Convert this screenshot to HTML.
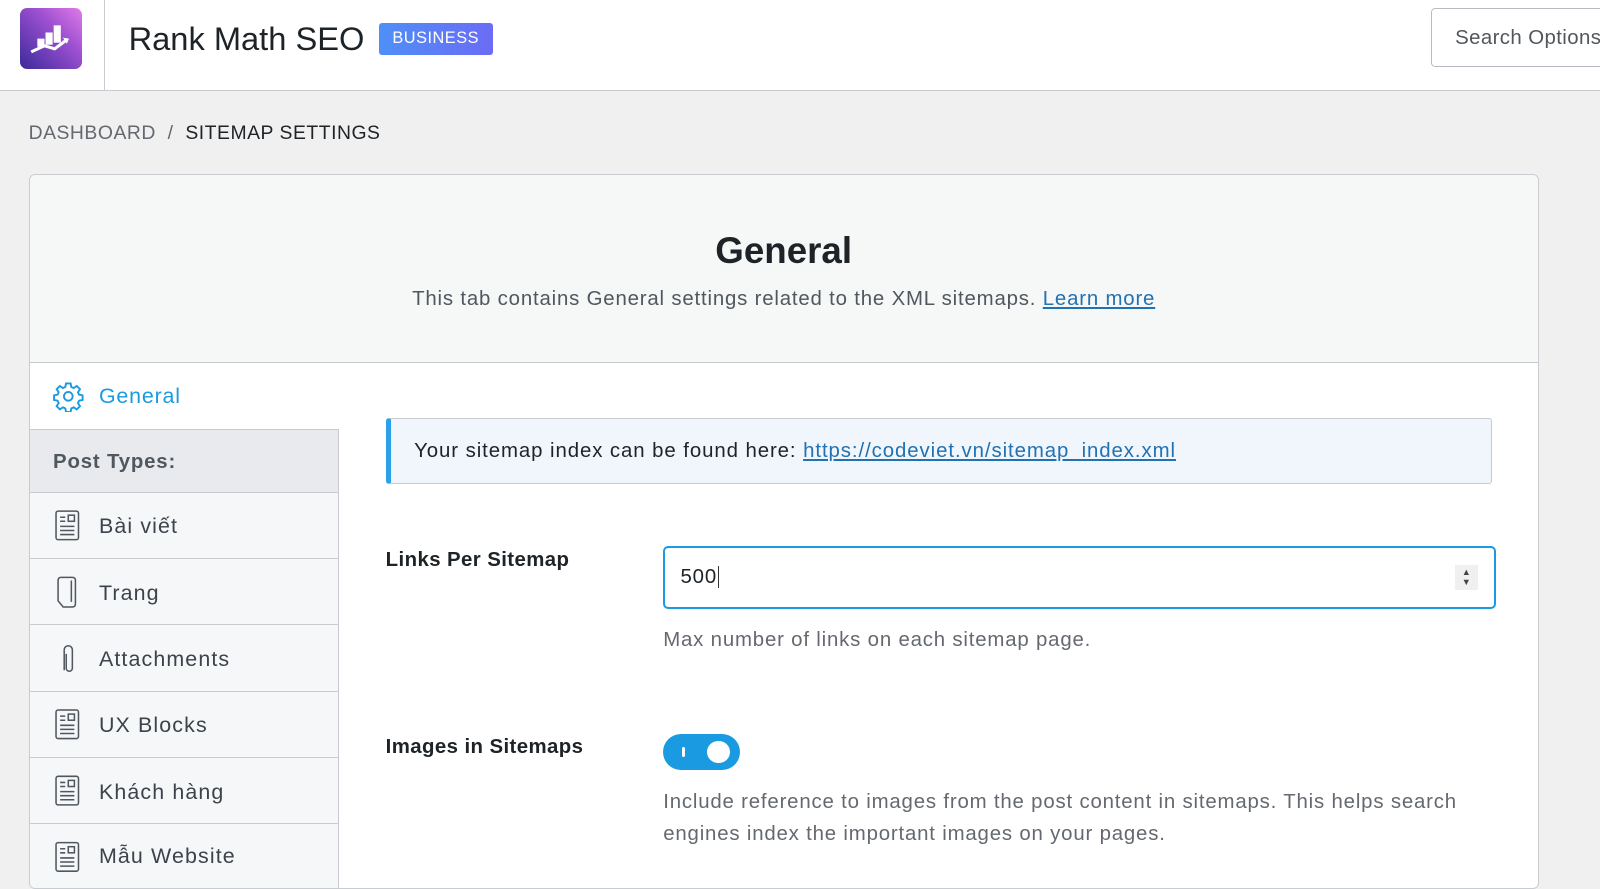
<!DOCTYPE html>
<html><head><meta charset="utf-8"><style>
html{zoom:1.0204}
body{margin:0;width:1568px;height:849px;overflow:hidden;background:#f0f0f1;font-family:"Liberation Sans",sans-serif;color:#242628;position:relative}
.a{position:absolute}
.hdr{left:0;top:0;width:1568px;height:88px;background:#fff;border-bottom:1px solid #c8ccd0}
.logo{left:20px;top:8px;width:60px;height:60px;border-radius:7px;background:linear-gradient(45deg,#3a2a9a,#9a4fd0 60%,#e07be8)}
.div{left:102px;top:0;width:1px;height:88px;background:#c8ccd0}
.title{left:126px;top:20px;font-size:32px;color:#1d2327}
.badge{left:371px;top:23px;width:112px;height:31px;border-radius:3px;background:linear-gradient(90deg,#4f8ff7,#6b6cf5);color:#fff;font-size:16px;line-height:31px;text-align:center;letter-spacing:.5px}
.search{left:1402px;top:8px;width:200px;height:58px;border:1px solid #b8bcc2;border-radius:4px;font-size:20px;color:#50575e;line-height:58px;padding-left:23px;box-sizing:border-box;letter-spacing:.4px}
.bc{left:28px;top:120px;font-size:19px;color:#646970;letter-spacing:.5px}
.card{left:28px;top:171px;width:1480px;height:700px;background:#fff;border:1px solid #c8ccd0;border-radius:6px;overflow:hidden;box-sizing:border-box;letter-spacing:.8px}
.chead{left:0;top:0;width:100%;height:183px;background:#f6f7f7;border-bottom:1px solid #c8ccd0}
.side{left:0;width:303px;box-sizing:border-box;border-right:1px solid #c8ccd0;border-bottom:1px solid #c8ccd0;background:#f6f7f9;font-size:21px;color:#3c434a;letter-spacing:1.1px}
</style></head><body>
<div class="a hdr"></div>
<div class="a logo"><svg width="60" height="60" viewBox="0 0 60 60"><g fill="#fff"><rect x="17" y="30" width="7" height="8"/><rect x="25" y="24" width="7" height="12"/><rect x="33" y="17" width="7" height="17"/></g><path d="M11 43 L24 37 L34 40 L46 31" stroke="#fff" stroke-width="3" fill="none"/><path d="M42 29 L48 30 L46 35Z" fill="#fff"/></svg></div>
<div class="a div"></div>
<div class="a title">Rank Math SEO</div>
<div class="a badge">BUSINESS</div>
<div class="a search">Search Options</div>
<div class="a bc">DASHBOARD &nbsp;/&nbsp; <span style="color:#1d2327">SITEMAP SETTINGS</span></div>
<div class="a card">
 <div class="a chead"></div>
 <div class="a" style="left:0;width:100%;top:53px;text-align:center;font-size:36px;font-weight:bold;color:#1d2327;letter-spacing:0">General</div>
 <div class="a" style="left:0;width:100%;top:110px;text-align:center;font-size:20px;color:#50575e">This tab contains General settings related to the XML sitemaps. <span style="color:#2271b1;text-decoration:underline">Learn more</span></div>
 <div class="a" style="left:22px;top:200px"><svg width="32" height="32" viewBox="0 0 24 24" fill="none" stroke="#1a9ae0" stroke-width="1.4"><circle cx="12" cy="12" r="3.2"/><path d="M10.3 2.5h3.4l.5 2.6 1.8.8 2.2-1.5 2.4 2.4-1.5 2.2.8 1.8 2.6.5v3.4l-2.6.5-.8 1.8 1.5 2.2-2.4 2.4-2.2-1.5-1.8.8-.5 2.6h-3.4l-.5-2.6-1.8-.8-2.2 1.5-2.4-2.4 1.5-2.2-.8-1.8-2.6-.5v-3.4l2.6-.5.8-1.8-1.5-2.2 2.4-2.4 2.2 1.5 1.8-.8z"/></svg></div>
 <div class="a" style="left:68px;top:204px;font-size:21px;color:#1a9ae0">General</div>
 <div class="a side" style="top:248px;height:63px;background:#e8eaed;border-top:1px solid #c8ccd0;font-weight:bold;color:#50575e;padding:21px 0 0 23px;font-size:20px;letter-spacing:.8px">Post Types:</div>
 <div class="a side" style="top:311px;height:65px;padding:21px 0 0 68px">Bài viết</div>
 <div class="a side" style="top:376px;height:65px;padding:21px 0 0 68px">Trang</div>
 <div class="a side" style="top:441px;height:65px;padding:21px 0 0 68px">Attachments</div>
 <div class="a side" style="top:506px;height:65px;padding:21px 0 0 68px">UX Blocks</div>
 <div class="a side" style="top:571px;height:65px;padding:21px 0 0 68px">Khách hàng</div>
 <div class="a side" style="top:636px;height:65px;padding:19px 0 0 68px">Mẫu Website</div>
 <svg class="a" style="left:24px;top:327px" width="28" height="360" viewBox="0 0 28 360" fill="none" stroke="#50575e" stroke-width="1.5">
  <rect x="2" y="2" width="22" height="28" rx="2"/><path d="M6 8h5M6 12h5M6 17h14M6 21h14M6 25h14"/><rect x="14" y="6" width="6" height="6"/>
  <path d="M4 70v20l5 6h9c2 0 3-1 3-3V70c0-2-1-3-3-3H7c-2 0-3 1-3 3z M17 70v21"/>
  <path d="M10 158v-20a4 4 0 0 1 8 0v18a3 3 0 0 1-6 0v-14"/>
  <rect x="2" y="197" width="22" height="28" rx="2"/><path d="M6 203h5M6 207h5M6 212h14M6 216h14M6 220h14"/><rect x="14" y="201" width="6" height="6"/>
  <rect x="2" y="262" width="22" height="28" rx="2"/><path d="M6 268h5M6 272h5M6 277h14M6 281h14M6 285h14"/><rect x="14" y="266" width="6" height="6"/>
  <rect x="2" y="327" width="22" height="28" rx="2"/><path d="M6 333h5M6 337h5M6 342h14M6 346h14M6 350h14"/><rect x="14" y="331" width="6" height="6"/>
 </svg>
 <div class="a" style="left:349px;top:238px;width:1084px;height:64px;background:#f0f6fc;border:1px solid #c8ccd0;border-left:5px solid #2aa1e8;border-radius:3px;box-sizing:border-box;padding:20px 0 0 23px;font-size:20px;color:#1d2327;letter-spacing:.9px">Your sitemap index can be found here: <span style="color:#2271b1;text-decoration:underline">https://codeviet.vn/sitemap_index.xml</span></div>
 <div class="a" style="left:349px;top:366px;font-size:20px;font-weight:bold;color:#1d2327;letter-spacing:.4px">Links Per Sitemap</div>
 <div class="a" style="left:621px;top:363px;width:816px;height:62px;border:2px solid #1a9ae0;border-radius:5px;box-sizing:border-box;padding:18px 0 0 15px;font-size:20px;color:#1d2327">500<span style="border-left:1px solid #333;margin-left:1px"></span>
  <div class="a" style="right:16px;top:17px;width:22px;height:24px;background:#f0f0f1;font-size:9px;line-height:10px;text-align:center;color:#444;padding-top:2px;box-sizing:border-box;letter-spacing:0">▲<br>▼</div></div>
 <div class="a" style="left:621px;top:444px;font-size:20px;color:#646970">Max number of links on each sitemap page.</div>
 <div class="a" style="left:349px;top:549px;font-size:20px;font-weight:bold;color:#1d2327;letter-spacing:.4px">Images in Sitemaps</div>
 <div class="a" style="left:621px;top:547px;width:75px;height:36px;border-radius:18px;background:#1a9ae0"><div class="a" style="left:18px;top:13px;width:3px;height:10px;background:#fff;border-radius:2px"></div><div class="a" style="left:43px;top:7px;width:22px;height:22px;border-radius:50%;background:#fff"></div></div>
 <div class="a" style="left:621px;top:598px;width:830px;font-size:20px;line-height:32px;color:#646970">Include reference to images from the post content in sitemaps. This helps search engines index the important images on your pages.</div>
</div>
</body></html>
